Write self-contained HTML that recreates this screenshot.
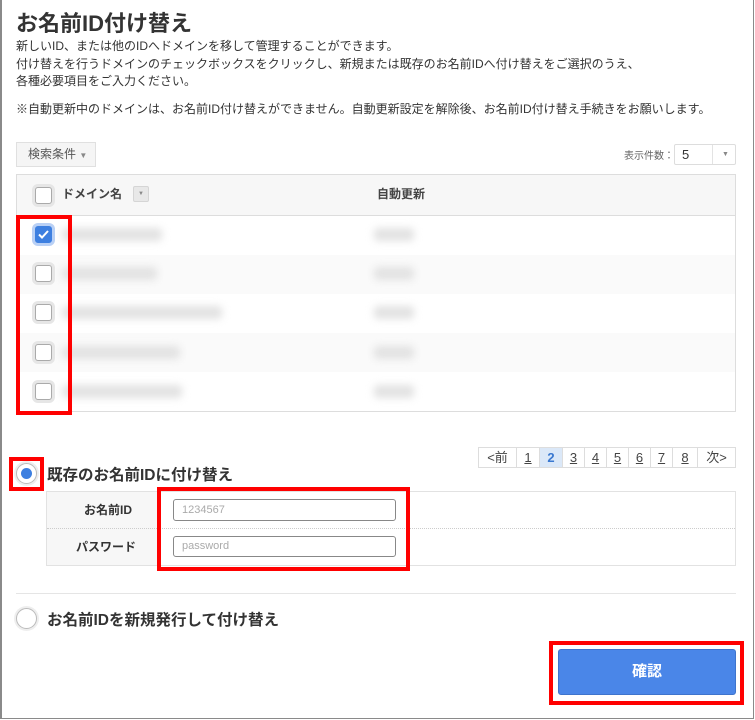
<!DOCTYPE html>
<html><head><meta charset="utf-8"><style>
*{box-sizing:border-box;margin:0;padding:0}
body{width:755px;height:720px;background:#fff;font-family:"Liberation Sans","Noto Sans CJK JP",sans-serif;color:#333;position:relative;overflow:hidden}
.frame{position:absolute;left:0;top:0;width:754px;height:719px;border:1px solid #8a8a8a;border-top:none;border-left:2px solid #8a8a8a}
.a{position:absolute}
.t{font-size:12px;line-height:17px;white-space:nowrap}
.cb{position:absolute;width:17px;height:17px;border:1px solid #aaa;border-radius:3px;background:#fff;box-shadow:0 0 0 3px #e6e6e6}
.blur{position:absolute;height:13px;background:#e2e2e2;filter:blur(4px);border-radius:4px}
.red{position:absolute;border:4px solid #f00}
.pg{position:absolute;top:447px;height:21px;border:1px solid #ddd;border-right:none;font-size:13px;line-height:19px;text-align:center;color:#444;text-decoration:underline;background:#fff}
</style></head><body>
<div class="frame"></div>
<div class="a" style="left:16px;top:9px;font-size:22px;font-weight:bold;color:#333;line-height:30px">お名前ID付け替え</div>
<div class="a t" style="left:16px;top:38px">新しいID、または他のIDへドメインを移して管理することができます。</div>
<div class="a t" style="left:16px;top:56px">付け替えを行うドメインのチェックボックスをクリックし、新規または既存のお名前IDへ付け替えをご選択のうえ、</div>
<div class="a t" style="left:16px;top:73px">各種必要項目をご入力ください。</div>
<div class="a t" style="left:16px;top:101px">※自動更新中のドメインは、お名前ID付け替えができません。自動更新設定を解除後、お名前ID付け替え手続きをお願いします。</div>

<div class="a" style="left:16px;top:142px;width:80px;height:25px;background:#f5f5f5;border:1px solid #e0e0e0;font-size:12px;line-height:23px;padding-left:11px;color:#555">検索条件 <span style="font-size:8px;color:#888">▼</span></div>
<div class="a" style="left:624px;top:147px;font-size:10px;color:#666">表示件数：</div>
<div class="a" style="left:674px;top:144px;width:62px;height:21px;border:1px solid #ddd;border-radius:2px;background:#fff;font-size:13px;line-height:19px;padding-left:7px">5<span style="position:absolute;left:37px;top:0;width:1px;height:19px;background:#e3e3e3"></span><span style="position:absolute;left:47px;top:0;font-size:7px;color:#888">▼</span></div>

<div class="a" style="left:16px;top:174px;width:720px;height:238px;border:1px solid #ddd">
 <div class="a" style="left:0;top:0;width:718px;height:41px;background:#f7f7f7;border-bottom:1px solid #ddd"></div>
 <div class="a" style="left:0;top:80px;width:718px;height:39px;background:#fafafa"></div>
 <div class="a" style="left:0;top:158px;width:718px;height:39px;background:#fafafa"></div>
</div>
<div class="cb" style="left:35px;top:187px"></div>
<div class="a" style="left:62px;top:185px;font-size:12px;font-weight:bold;color:#444">ドメイン名</div>
<div class="a" style="left:133px;top:186px;width:16px;height:16px;background:#e8e8e8;border:1px solid #d5d5d5;border-radius:2px;font-size:6px;color:#888;text-align:center;line-height:14px">▼</div>
<div class="a" style="left:377px;top:185px;font-size:12px;font-weight:bold;color:#444">自動更新</div>

<div class="cb" style="left:35px;top:226px;background:#3d7fe0;border-color:#3d7fe0;box-shadow:0 0 0 3px #b9d0f5"><svg width="15" height="15" viewBox="0 0 15 15" style="position:absolute;left:0;top:0"><path d="M3 7.5 L6 10.5 L12 4" stroke="#fff" stroke-width="2" fill="none"/></svg></div>
<div class="cb" style="left:35px;top:265px"></div>
<div class="cb" style="left:35px;top:304px"></div>
<div class="cb" style="left:35px;top:344px"></div>
<div class="cb" style="left:35px;top:383px"></div>

<div class="blur" style="left:62px;top:228px;width:100px"></div>
<div class="blur" style="left:62px;top:267px;width:95px"></div>
<div class="blur" style="left:62px;top:306px;width:160px"></div>
<div class="blur" style="left:62px;top:346px;width:118px"></div>
<div class="blur" style="left:62px;top:385px;width:120px"></div>
<div class="blur" style="left:374px;top:228px;width:40px"></div>
<div class="blur" style="left:374px;top:267px;width:40px"></div>
<div class="blur" style="left:374px;top:306px;width:40px"></div>
<div class="blur" style="left:374px;top:346px;width:40px"></div>
<div class="blur" style="left:374px;top:385px;width:40px"></div>
<div class="red" style="left:16px;top:215px;width:56px;height:200px"></div>

<div class="pg" style="left:478px;width:38px;text-decoration:none">&lt;前</div>
<div class="pg" style="left:516px;width:23px">1</div>
<div class="pg" style="left:539px;width:23px;background:#dbe8f8;color:#3a78d0;font-weight:bold;text-decoration:none">2</div>
<div class="pg" style="left:562px;width:22px">3</div>
<div class="pg" style="left:584px;width:22px">4</div>
<div class="pg" style="left:606px;width:22px">5</div>
<div class="pg" style="left:628px;width:22px">6</div>
<div class="pg" style="left:650px;width:22px">7</div>
<div class="pg" style="left:672px;width:25px">8</div>
<div class="pg" style="left:697px;width:39px;border-right:1px solid #ddd;text-decoration:none">次&gt;</div>

<div class="a" style="left:16px;top:463px;width:21px;height:21px;border-radius:50%;border:1px solid #bbb;background:#fff;box-shadow:0 0 0 2px #eee"></div>
<div class="a" style="left:21px;top:468px;width:11px;height:11px;border-radius:50%;background:#3d7fe0"></div>
<div class="red" style="left:9px;top:457px;width:35px;height:34px"></div>
<div class="a" style="left:47px;top:463px;font-size:15.5px;font-weight:bold;color:#333">既存のお名前IDに付け替え</div>

<div class="a" style="left:46px;top:491px;width:690px;height:75px;border:1px solid #e2e2e2;background:#f7f7f7"></div>
<div class="a" style="left:47px;top:528px;width:688px;border-top:1px dotted #ccc"></div>
<div class="a" style="left:157px;top:492px;width:578px;height:73px;background:#fff"></div>
<div class="a" style="left:157px;top:528px;width:578px;border-top:1px dotted #ccc"></div>
<div class="a" style="left:84px;top:501px;font-size:12px;font-weight:bold;color:#333">お名前ID</div>
<div class="a" style="left:76px;top:538px;font-size:12px;font-weight:bold;color:#333">パスワード</div>
<div class="a" style="left:173px;top:499px;width:223px;height:22px;border:1px solid #888;border-radius:3px;font-size:11px;color:#aaa;line-height:20px;padding-left:8px">1234567</div>
<div class="a" style="left:173px;top:536px;width:223px;height:21px;border:1px solid #888;border-radius:3px;font-size:11px;color:#aaa;line-height:19px;padding-left:8px">password</div>
<div class="red" style="left:157px;top:487px;width:253px;height:84px"></div>

<div class="a" style="left:16px;top:593px;width:720px;border-top:1px solid #e5e5e5"></div>
<div class="a" style="left:16px;top:608px;width:21px;height:21px;border-radius:50%;border:1px solid #bbb;background:#fff;box-shadow:0 0 0 2px #eee"></div>
<div class="a" style="left:47px;top:608px;font-size:15.5px;font-weight:bold;color:#333">お名前IDを新規発行して付け替え</div>

<div class="a" style="left:558px;top:649px;width:178px;height:46px;background:#4a86e8;border:1px solid #3f74cc;border-radius:3px;color:#fff;font-size:15px;font-weight:bold;text-align:center;line-height:44px">確認</div>
<div class="red" style="left:549px;top:641px;width:195px;height:64px"></div>
</body></html>
